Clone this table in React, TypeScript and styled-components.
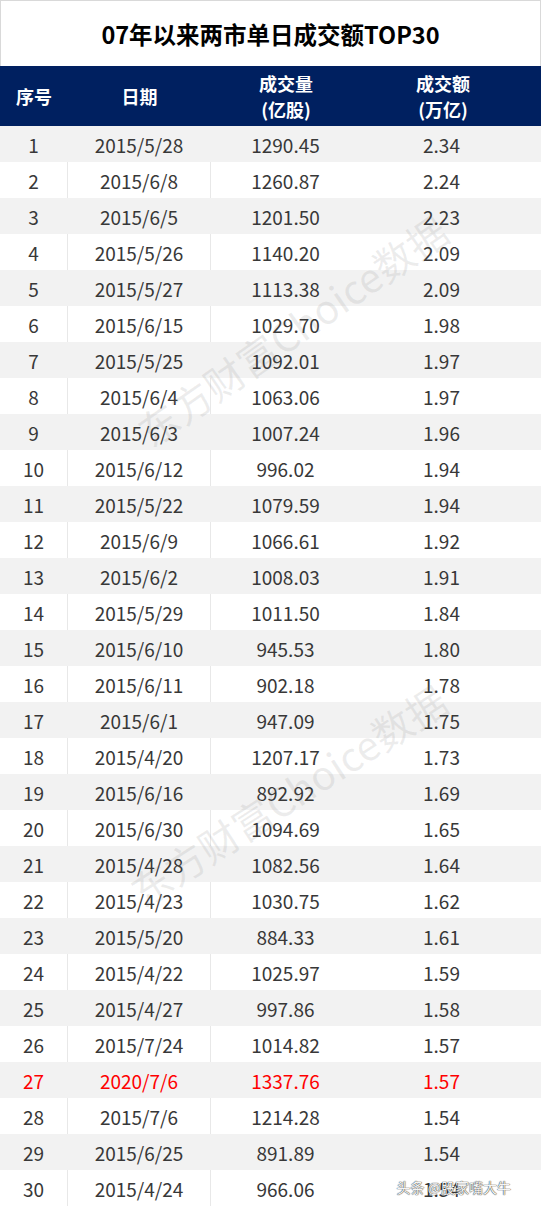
import React from "react";
import styled, { createGlobalStyle } from "styled-components";

const Global = createGlobalStyle`
  html, body {
    margin: 0;
    padding: 0;
    background: #fff;
  }
  body {
    font-family: "Noto Sans CJK SC", "Noto Sans", sans-serif;
  }
`;

const rows: [string, string, string, string][] = [
  ["1", "2015/5/28", "1290.45", "2.34"],
  ["2", "2015/6/8", "1260.87", "2.24"],
  ["3", "2015/6/5", "1201.50", "2.23"],
  ["4", "2015/5/26", "1140.20", "2.09"],
  ["5", "2015/5/27", "1113.38", "2.09"],
  ["6", "2015/6/15", "1029.70", "1.98"],
  ["7", "2015/5/25", "1092.01", "1.97"],
  ["8", "2015/6/4", "1063.06", "1.97"],
  ["9", "2015/6/3", "1007.24", "1.96"],
  ["10", "2015/6/12", "996.02", "1.94"],
  ["11", "2015/5/22", "1079.59", "1.94"],
  ["12", "2015/6/9", "1066.61", "1.92"],
  ["13", "2015/6/2", "1008.03", "1.91"],
  ["14", "2015/5/29", "1011.50", "1.84"],
  ["15", "2015/6/10", "945.53", "1.80"],
  ["16", "2015/6/11", "902.18", "1.78"],
  ["17", "2015/6/1", "947.09", "1.75"],
  ["18", "2015/4/20", "1207.17", "1.73"],
  ["19", "2015/6/16", "892.92", "1.69"],
  ["20", "2015/6/30", "1094.69", "1.65"],
  ["21", "2015/4/28", "1082.56", "1.64"],
  ["22", "2015/4/23", "1030.75", "1.62"],
  ["23", "2015/5/20", "884.33", "1.61"],
  ["24", "2015/4/22", "1025.97", "1.59"],
  ["25", "2015/4/27", "997.86", "1.58"],
  ["26", "2015/7/24", "1014.82", "1.57"],
  ["27", "2020/7/6", "1337.76", "1.57"],
  ["28", "2015/7/6", "1214.28", "1.54"],
  ["29", "2015/6/25", "891.89", "1.54"],
  ["30", "2015/4/24", "966.06", "1.54"],
];

const Page = styled.div`
  position: relative;
  width: 541px;
  height: 1207px;
  overflow: hidden;
  background: #fff;
`;

const Title = styled.h1`
  box-sizing: border-box;
  height: 66px;
  margin: 0;
  border: 1px solid #d9d9d9;
  border-bottom: none;
  display: flex;
  align-items: center;
  justify-content: center;
  font-size: 23.5px;
  font-weight: 700;
  color: #000;
`;

const Grid = styled.div`
  display: grid;
  grid-template-columns: 68px 143px 150px 1fr;
`;

const Head = styled(Grid)`
  height: 60px;
  background: #002060;
  color: #fff;
  font-weight: 700;
  font-size: 18px;
  line-height: 26px;
`;

const HeadCell = styled.div<{ $last?: boolean }>`
  display: flex;
  align-items: center;
  justify-content: center;
  text-align: center;
  padding-right: ${(p) => (p.$last ? "16px" : "0")};
`;

const Row = styled(Grid)<{ $shade: boolean; $hot: boolean }>`
  height: 36px;
  background: ${(p) => (p.$shade ? "#f2f2f2" : "#fff")};
  color: ${(p) => (p.$hot ? "#ff0000" : "#383838")};
  font-size: 19px;
`;

const Cell = styled.div<{ $line?: boolean; $last?: boolean }>`
  display: flex;
  align-items: center;
  justify-content: center;
  border-right: 1px solid ${(p) => (p.$line ? "#e8e8e8" : "transparent")};
  padding-right: ${(p) => (p.$last ? "18px" : "0")};
`;

const Watermark = styled.div<{ $x: number; $y: number; $rot: number }>`
  position: absolute;
  left: ${(p) => p.$x}px;
  top: ${(p) => p.$y}px;
  transform: translate(-50%, -50%) rotate(${(p) => p.$rot}deg);
  font-size: 40px;
  color: rgba(110, 110, 110, 0.12);
  white-space: nowrap;
  pointer-events: none;
`;

const Signature = styled.div`
  position: absolute;
  right: 30px;
  bottom: 10px;
  font-size: 14px;
  color: #f4f4f4;
  text-shadow: 0 0 1px #333, 0 0 1px #333;
  white-space: nowrap;
`;

export default function App() {
  return (
    <Page>
      <Global />
      <Title>07年以来两市单日成交额TOP30</Title>
      <Head>
        <HeadCell>序号</HeadCell>
        <HeadCell>日期</HeadCell>
        <HeadCell>
          成交量
          <br />
          (亿股)
        </HeadCell>
        <HeadCell $last>
          成交额
          <br />
          (万亿)
        </HeadCell>
      </Head>
      {rows.map((r, i) => {
        const shade = i % 2 === 0;
        return (
          <Row key={r[0]} $shade={shade} $hot={r[0] === "27"}>
            <Cell $line={!shade}>{r[0]}</Cell>
            <Cell $line={!shade}>{r[1]}</Cell>
            <Cell>{r[2]}</Cell>
            <Cell $last>{r[3]}</Cell>
          </Row>
        );
      })}
      <Watermark $x={292} $y={330} $rot={-35}>
        东方财富Choice数据
      </Watermark>
      <Watermark $x={288} $y={795} $rot={-33}>
        东方财富Choice数据
      </Watermark>
      <Signature>头条 @股家嘴大牛</Signature>
    </Page>
  );
}
